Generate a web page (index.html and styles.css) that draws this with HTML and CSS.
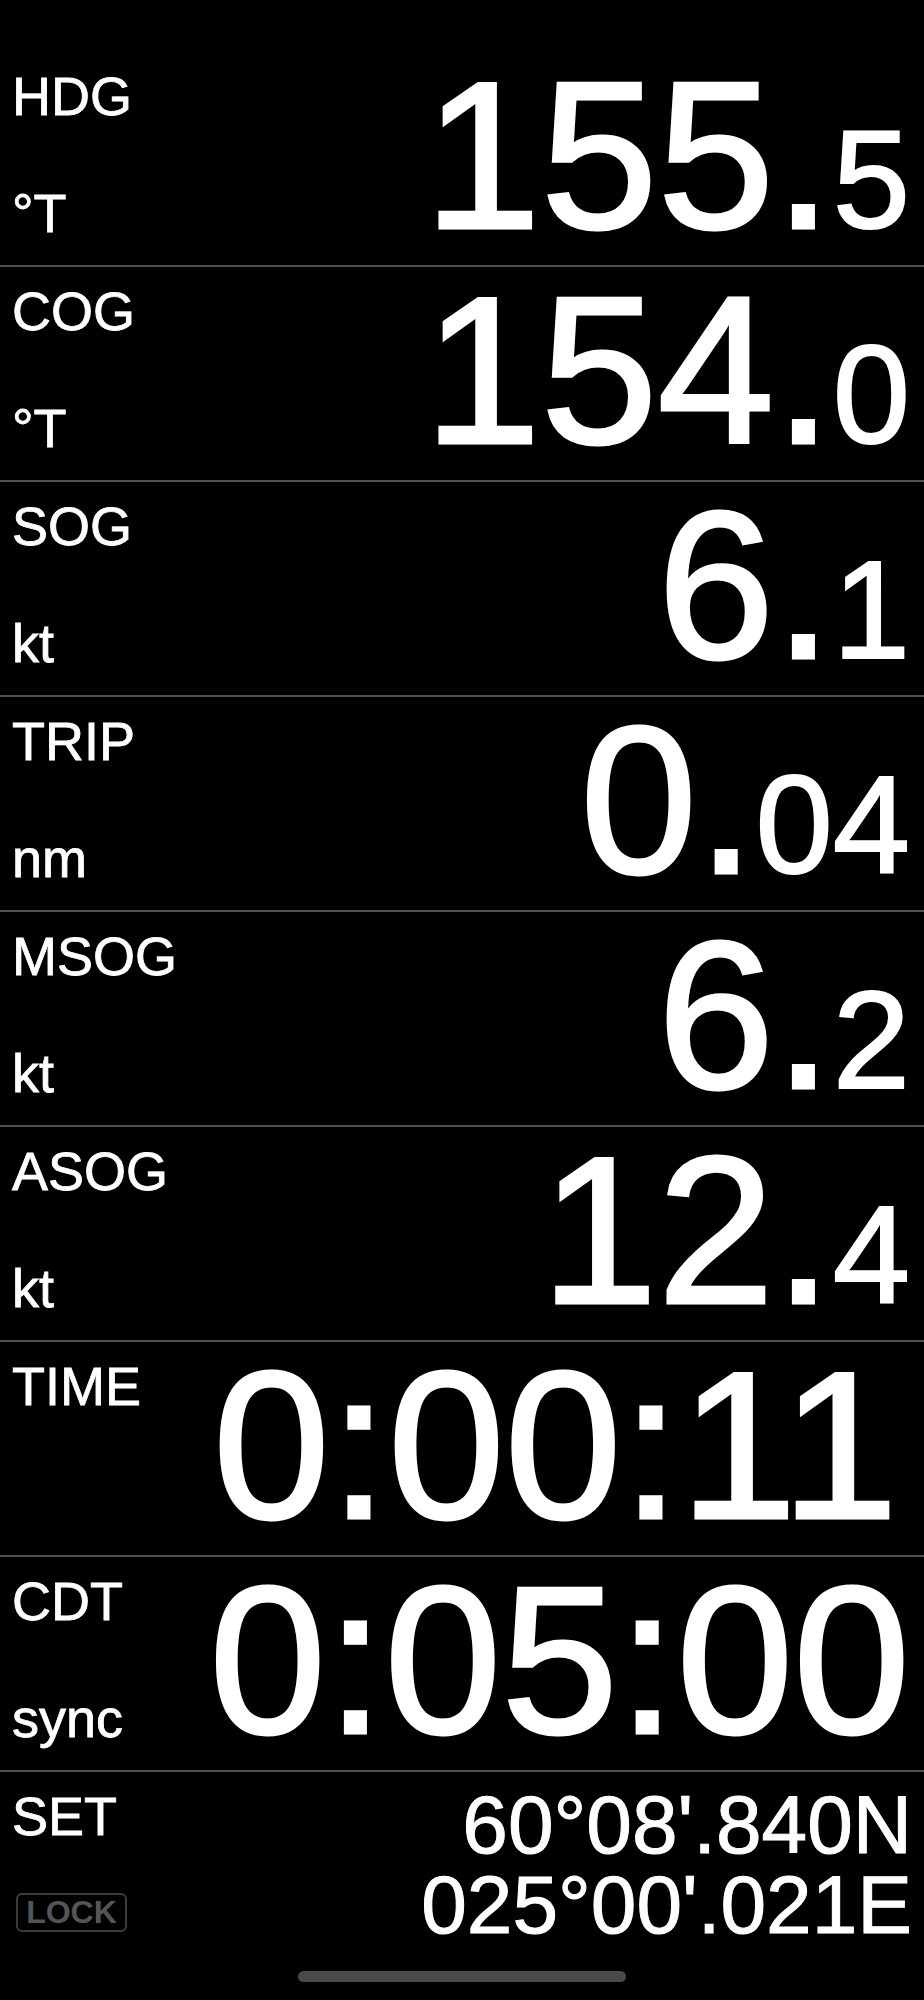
FILE: index.html
```html
<!DOCTYPE html>
<html lang="en">
<head>
  <meta charset="UTF-8" />
  <meta name="viewport" content="width=device-width, initial-scale=1" />
  <title>Race Instruments</title>
  <link rel="stylesheet" href="styles.css">
</head>
<body>
  <main class="panel">
    <div class="row">
      <div class="meta"><div class="label">HDG</div><div class="unit">°T</div></div>
      <div class="value">155.<span class="frac">5</span></div>
    </div>
    <div class="row">
      <div class="meta"><div class="label">COG</div><div class="unit">°T</div></div>
      <div class="value">154.<span class="frac">0</span></div>
    </div>
    <div class="row">
      <div class="meta"><div class="label">SOG</div><div class="unit">kt</div></div>
      <div class="value">6.<span class="frac">1</span></div>
    </div>
    <div class="row">
      <div class="meta"><div class="label">TRIP</div><div class="unit">nm</div></div>
      <div class="value">0.<span class="frac">04</span></div>
    </div>
    <div class="row">
      <div class="meta"><div class="label">MSOG</div><div class="unit">kt</div></div>
      <div class="value">6.<span class="frac">2</span></div>
    </div>
    <div class="row">
      <div class="meta"><div class="label">ASOG</div><div class="unit">kt</div></div>
      <div class="value">12.<span class="frac">4</span></div>
    </div>
    <div class="row">
      <div class="meta"><div class="label">TIME</div></div>
      <div class="value value-clock">0:00:11</div>
    </div>
    <div class="row">
      <div class="meta"><div class="label">CDT</div><div class="unit">sync</div></div>
      <div class="value">0:05:00</div>
    </div>
    <div class="row row-last">
      <div class="meta">
        <div class="label">SET</div>
        <button class="lock" type="button">LOCK</button>
      </div>
      <div class="position">
        <div>60°08'.840N</div>
        <div>025°00'.021E</div>
      </div>
    </div>
  </main>

  <div class="home-bar"></div>
</body>
</html>
```

FILE: styles.css
```css
:root {
  --line: #505050;
  --dim: #555;
}
body {
  font-family: 'Liberation Sans', Arial, sans-serif;
  margin: 0;
  background: #000;
  color: #fff;
  padding-top: 52px;
}
.row {
  display: flex;
  height: 213px;
  border-bottom: 2px solid var(--line);
  padding: 0 12px;
}
.row-last {
  border-bottom: none;
}
.meta {
  display: flex;
  flex-direction: column;
  align-items: flex-start;
  flex-shrink: 0;
  width: 150px;
}
.label,
.unit {
  font-size: 54px;
  line-height: 54px;
  -webkit-text-stroke: 0.8px #fff;
}
.label {
  margin-top: 17px;
}
.unit {
  margin-top: 63px;
}
.value {
  flex: 1;
  text-align: right;
  font-size: 210px;
  line-height: 200px;
  padding-top: 4px;
  padding-right: 2px;
  white-space: nowrap;
  -webkit-text-stroke: 3px #fff;
}
.value-clock {
  padding-right: 14px;
}
.frac {
  font-size: 139px;
  line-height: 1;
  -webkit-text-stroke: 2px #fff;
}
.lock {
  margin: 50px 0 0 4px;
  width: 111px;
  height: 39px;
  padding: 0;
  background: transparent;
  border: 2px solid #3c3c3c;
  border-radius: 6px;
  color: var(--dim);
  font-family: inherit;
  font-weight: bold;
  font-size: 32px;
  line-height: 35px;
}
.position {
  flex: 1;
  text-align: right;
  font-size: 82px;
  line-height: 80px;
  padding-top: 13px;
  white-space: nowrap;
  -webkit-text-stroke: 1px #fff;
}
.home-bar {
  position: fixed;
  left: 50%;
  bottom: 18px;
  width: 328px;
  height: 11px;
  margin-left: -164px;
  border-radius: 6px;
  background: #4a4a4a;
}
```
